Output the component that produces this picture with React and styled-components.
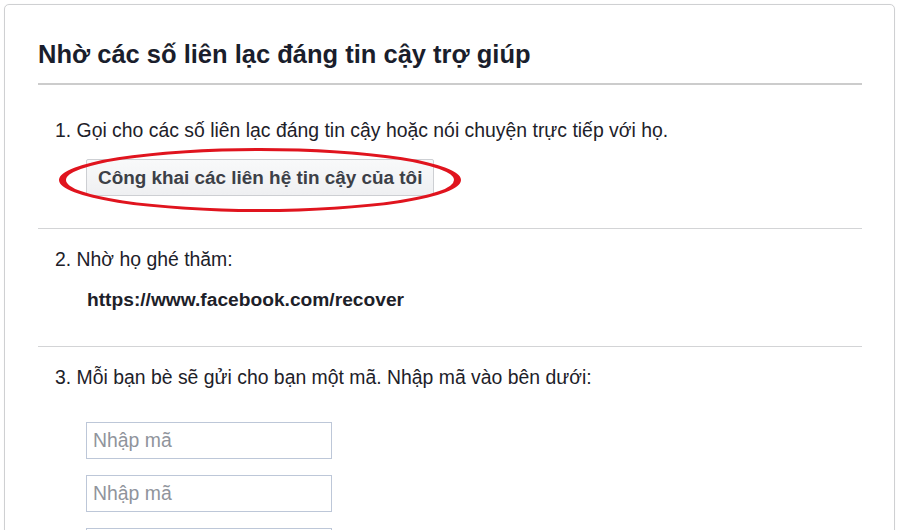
import React from "react";
import styled, { createGlobalStyle } from "styled-components";

const Global = createGlobalStyle`
  html, body { margin: 0; padding: 0; background: #fff; }
  body { font-family: "Liberation Sans", Arial, sans-serif; color: #1d2129; overflow: hidden; }
`;

const Page = styled.div`
  width: 900px;
  height: 530px;
  overflow: hidden;
  padding: 4px 0 0 4px;
  box-sizing: border-box;
`;

const Card = styled.div`
  width: 891px;
  height: 600px;
  box-sizing: border-box;
  border: 1px solid #cfd0d2;
  border-radius: 5px;
  box-shadow: 0 0 1px rgba(0,0,0,0.08);
  padding: 35px 32px 0 33px;
`;

const Title = styled.h1`
  margin: 0;
  font-size: 25.5px;
  line-height: 28px;
  font-weight: bold;
  color: #1a1e2c;
`;

const Divider = styled.div`
  height: ${p => p.$thick ? 2 : 1}px;
  background: ${p => p.$thick ? "#cccccc" : "#d3d4d6"};
`;

const HeadDivider = styled(Divider)`
  margin-top: 15px;
`;

const Section = styled.div`
  padding: ${p => p.$top}px 0 ${p => p.$bottom}px 17px;
  display: flex;
  flex-direction: column;
  align-items: flex-start;
`;

const Step = styled.p`
  margin: 0;
  font-size: 19.4px;
  line-height: 20px;
  color: #1d2129;
  white-space: nowrap;
`;

const ButtonWrap = styled.div`
  position: relative;
  margin: 19px 0 0 31px;
`;

const Button = styled.button`
  height: 37px;
  padding: 0 11px;
  border: 1px solid #cdcfd3;
  border-radius: 2px;
  background: linear-gradient(#f8f9fa, #eff0f2);
  font-family: "Liberation Sans", Arial, sans-serif;
  font-size: 18.9px;
  font-weight: bold;
  color: #3c4047;
  white-space: nowrap;
  cursor: pointer;
`;

const Circle = styled.svg`
  position: absolute;
  left: -28px;
  top: -13px;
  pointer-events: none;
`;

const Url = styled.div`
  margin: 21px 0 0 32px;
  font-size: 19.2px;
  line-height: 20px;
  font-weight: bold;
  color: #1d2129;
`;

const Inputs = styled.div`
  margin: 35px 0 0 31px;
  display: flex;
  flex-direction: column;
  gap: 16px;
`;

const CodeInput = styled.input`
  width: 246px;
  height: 37px;
  box-sizing: border-box;
  border: 1px solid #bdc7d8;
  padding: 0 6px;
  font-family: "Liberation Sans", Arial, sans-serif;
  font-size: 19.4px;
  color: #1d2129;
  outline: none;
  &::placeholder { color: #90949c; }
`;

const ring =
  "M1 34 A201 32 0 1 0 403 34 A201 32 0 1 0 1 34 Z " +
  "M8 34 A194 29 0 1 1 396 34 A194 29 0 1 1 8 34 Z";

export default function App() {
  return (
    <>
      <Global />
      <Page>
        <Card>
          <Title>Nhờ các số liên lạc đáng tin cậy trợ giúp</Title>
          <HeadDivider $thick />
          <Section $top={35} $bottom={32}>
            <Step>1. Gọi cho các số liên lạc đáng tin cậy hoặc nói chuyện trực tiếp với họ.</Step>
            <ButtonWrap>
              <Button>Công khai các liên hệ tin cậy của tôi</Button>
              <Circle width="404" height="68" viewBox="0 0 404 68">
                <path d={ring} fill="#e0141e" fillRule="evenodd" />
              </Circle>
            </ButtonWrap>
          </Section>
          <Divider />
          <Section $top={20} $bottom={36}>
            <Step>2. Nhờ họ ghé thăm:</Step>
            <Url>https://www.facebook.com/recover</Url>
          </Section>
          <Divider />
          <Section $top={20} $bottom={0}>
            <Step>3. Mỗi bạn bè sẽ gửi cho bạn một mã. Nhập mã vào bên dưới:</Step>
            <Inputs>
              <CodeInput placeholder="Nhập mã" />
              <CodeInput placeholder="Nhập mã" />
              <CodeInput placeholder="Nhập mã" />
            </Inputs>
          </Section>
        </Card>
      </Page>
    </>
  );
}
